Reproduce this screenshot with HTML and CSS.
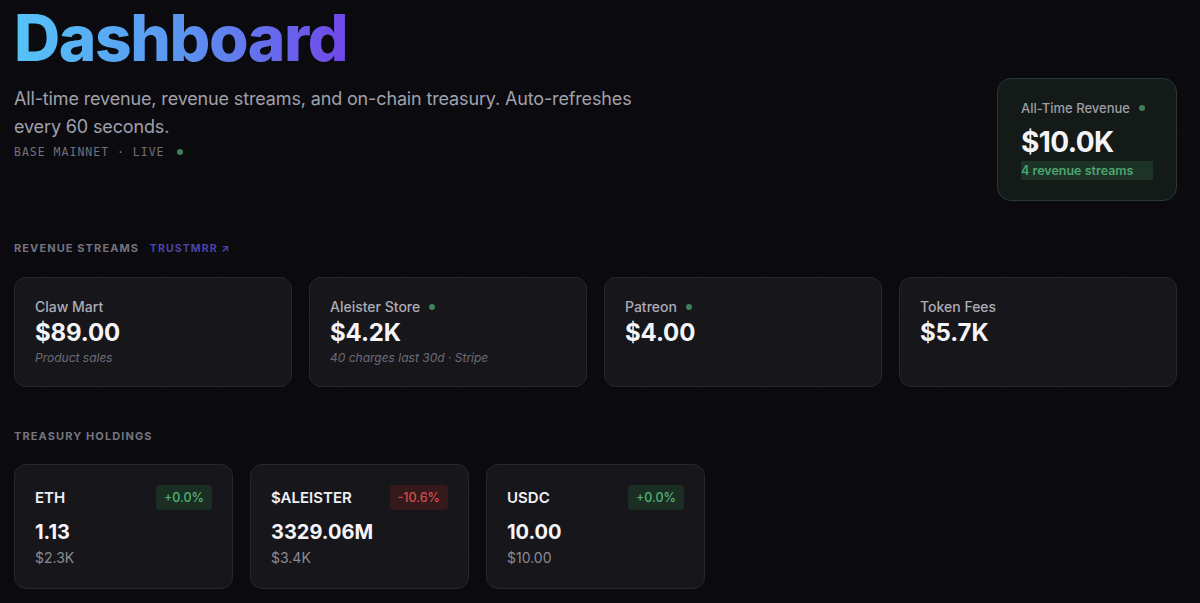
FILE: index.html
```html
<!DOCTYPE html>
<html lang="en">
<head>
<meta charset="utf-8">
<title>Dashboard</title>
<link rel="stylesheet" href="styles.css">
</head>
<body>
<div class="page">
  <header class="header">
    <div class="intro">
      <h1 class="title">Dashboard</h1>
      <p class="lead">All-time revenue, revenue streams, and on-chain treasury. Auto-refreshes every 60 seconds.</p>
      <div class="network">BASE MAINNET · LIVE <span class="dot"></span></div>
    </div>
    <div class="total-card">
      <div class="total-label">All-Time Revenue <span class="dot"></span></div>
      <div class="total-value">$10.0K</div>
      <div class="total-note">4 revenue streams</div>
    </div>
  </header>

  <section class="section">
    <div class="section-label">REVENUE STREAMS <a class="section-link">TRUSTMRR ↗</a></div>
    <div class="streams">
      <div class="card stream">
        <div class="stream-name">Claw Mart</div>
        <div class="stream-value">$89.00</div>
        <div class="stream-note">Product sales</div>
      </div>
      <div class="card stream">
        <div class="stream-name">Aleister Store <span class="dot"></span></div>
        <div class="stream-value">$4.2K</div>
        <div class="stream-note">40 charges last 30d · Stripe</div>
      </div>
      <div class="card stream">
        <div class="stream-name">Patreon <span class="dot"></span></div>
        <div class="stream-value">$4.00</div>
      </div>
      <div class="card stream">
        <div class="stream-name">Token Fees</div>
        <div class="stream-value">$5.7K</div>
      </div>
    </div>
  </section>

  <section class="section">
    <div class="section-label">TREASURY HOLDINGS</div>
    <div class="holdings">
      <div class="card holding">
        <div class="holding-head">
          <span class="holding-name">ETH</span>
          <span class="badge up">+0.0%</span>
        </div>
        <div class="holding-value">1.13</div>
        <div class="holding-usd">$2.3K</div>
      </div>
      <div class="card holding">
        <div class="holding-head">
          <span class="holding-name">$ALEISTER</span>
          <span class="badge down">-10.6%</span>
        </div>
        <div class="holding-value">3329.06M</div>
        <div class="holding-usd">$3.4K</div>
      </div>
      <div class="card holding">
        <div class="holding-head">
          <span class="holding-name">USDC</span>
          <span class="badge up">+0.0%</span>
        </div>
        <div class="holding-value">10.00</div>
        <div class="holding-usd">$10.00</div>
      </div>
    </div>
  </section>
</div>
</body>
</html>
```

FILE: styles.css
```css
* { box-sizing: border-box; }

html, body {
  margin: 0;
  height: 100%;
}

body {
  background-color: #0b0b0f;
  background-image:
    linear-gradient(90deg, rgba(255,255,255,0.012) 1px, transparent 1px),
    linear-gradient(0deg, rgba(255,255,255,0.012) 1px, transparent 1px);
  background-size: 60px 60px;
  background-position: 42px 15px;
  font-family: Inter, "Noto Sans", "Liberation Sans", sans-serif;
  color: #f2f2f5;
  overflow: hidden;
}

.page {
  padding: 0 23px 0 14px;
}

.header {
  display: flex;
  justify-content: space-between;
  align-items: flex-start;
}

.title {
  margin: 3px 0 0;
  font-size: 64px;
  line-height: 70px;
  font-weight: 800;
  letter-spacing: -0.022em;
  display: inline-block;
  background: linear-gradient(90deg, #55c4f8 0%, #5a95f0 50%, #7047e8 100%);
  -webkit-background-clip: text;
  background-clip: text;
  color: transparent;
}

.lead {
  margin: 12px 0 0;
  max-width: 650px;
  font-size: 18px;
  line-height: 28px;
  letter-spacing: -0.008em;
  color: #a0a0ab;
}

.network {
  margin-top: 3px;
  font-family: "DejaVu Sans Mono", "Liberation Mono", monospace;
  font-size: 11.5px;
  line-height: 16px;
  letter-spacing: 1px;
  color: #70707a;
  display: flex;
  align-items: center;
}

.dot {
  display: inline-block;
  width: 6px;
  height: 6px;
  border-radius: 50%;
  background: #3f7f58;
  margin-left: 9px;
}

.network .dot {
  margin-left: 12px;
}

.total-card {
  margin-top: 78px;
  width: 180px;
  padding: 20px 23px;
  border: 1px solid #2a3832;
  border-radius: 14px;
  background: #131a18;
}

.total-label {
  font-size: 13px;
  line-height: 18px;
  font-weight: 500;
  color: #9d9da8;
  display: flex;
  align-items: center;
}

.total-value {
  margin-top: 8px;
  font-size: 28px;
  line-height: 34px;
  font-weight: 700;
  letter-spacing: -0.02em;
  color: #f4f4f7;
}

.total-note {
  margin-top: 2px;
  font-size: 12.5px;
  line-height: 19px;
  font-weight: 600;
  color: #4ea570;
  background: #1d3328;
}

.section {
  margin-top: 39px;
}

.section + .section {
  margin-top: 41px;
}

.section-label {
  font-size: 11px;
  line-height: 16px;
  font-weight: 700;
  letter-spacing: 0.1em;
  color: #74747f;
  margin-bottom: 20px;
}

.section-link {
  margin-left: 7px;
  font-size: 10.5px;
  color: #4b44a6;
}

.card {
  background: #17171b;
  border: 1px solid #27272d;
  border-radius: 12px;
}

.streams {
  display: grid;
  grid-template-columns: repeat(4, 1fr);
  gap: 17px;
}

.stream {
  padding: 20px 20px 20px;
}

.stream-name {
  font-size: 14px;
  line-height: 18px;
  font-weight: 500;
  color: #acacb7;
  display: flex;
  align-items: center;
}

.stream-value {
  margin-top: 1px;
  font-size: 24px;
  line-height: 32px;
  font-weight: 700;
  letter-spacing: -0.005em;
  color: #f5f5f8;
}

.stream-note {
  margin-top: 1px;
  font-size: 12px;
  line-height: 16px;
  font-style: italic;
  color: #6c6c77;
}

.holdings {
  display: grid;
  grid-template-columns: repeat(5, 1fr);
  gap: 17px;
}

.holding {
  padding: 20px;
}

.holding-head {
  display: flex;
  justify-content: space-between;
  align-items: center;
}

.holding-name {
  font-size: 15px;
  font-weight: 600;
  color: #f0f0f4;
}

.badge {
  height: 25px;
  padding: 0 8px;
  border-radius: 4px;
  font-size: 12.5px;
  line-height: 25px;
  font-weight: 500;
}

.badge.up {
  color: #4fb377;
  background: #1a2e24;
}

.badge.down {
  color: #d14f4f;
  background: #35191b;
}

.holding-value {
  margin-top: 8px;
  font-size: 20px;
  line-height: 28px;
  font-weight: 700;
  color: #f5f5f8;
}

.holding-usd {
  margin-top: 2px;
  font-size: 14px;
  line-height: 20px;
  color: #8a8a93;
}
```
